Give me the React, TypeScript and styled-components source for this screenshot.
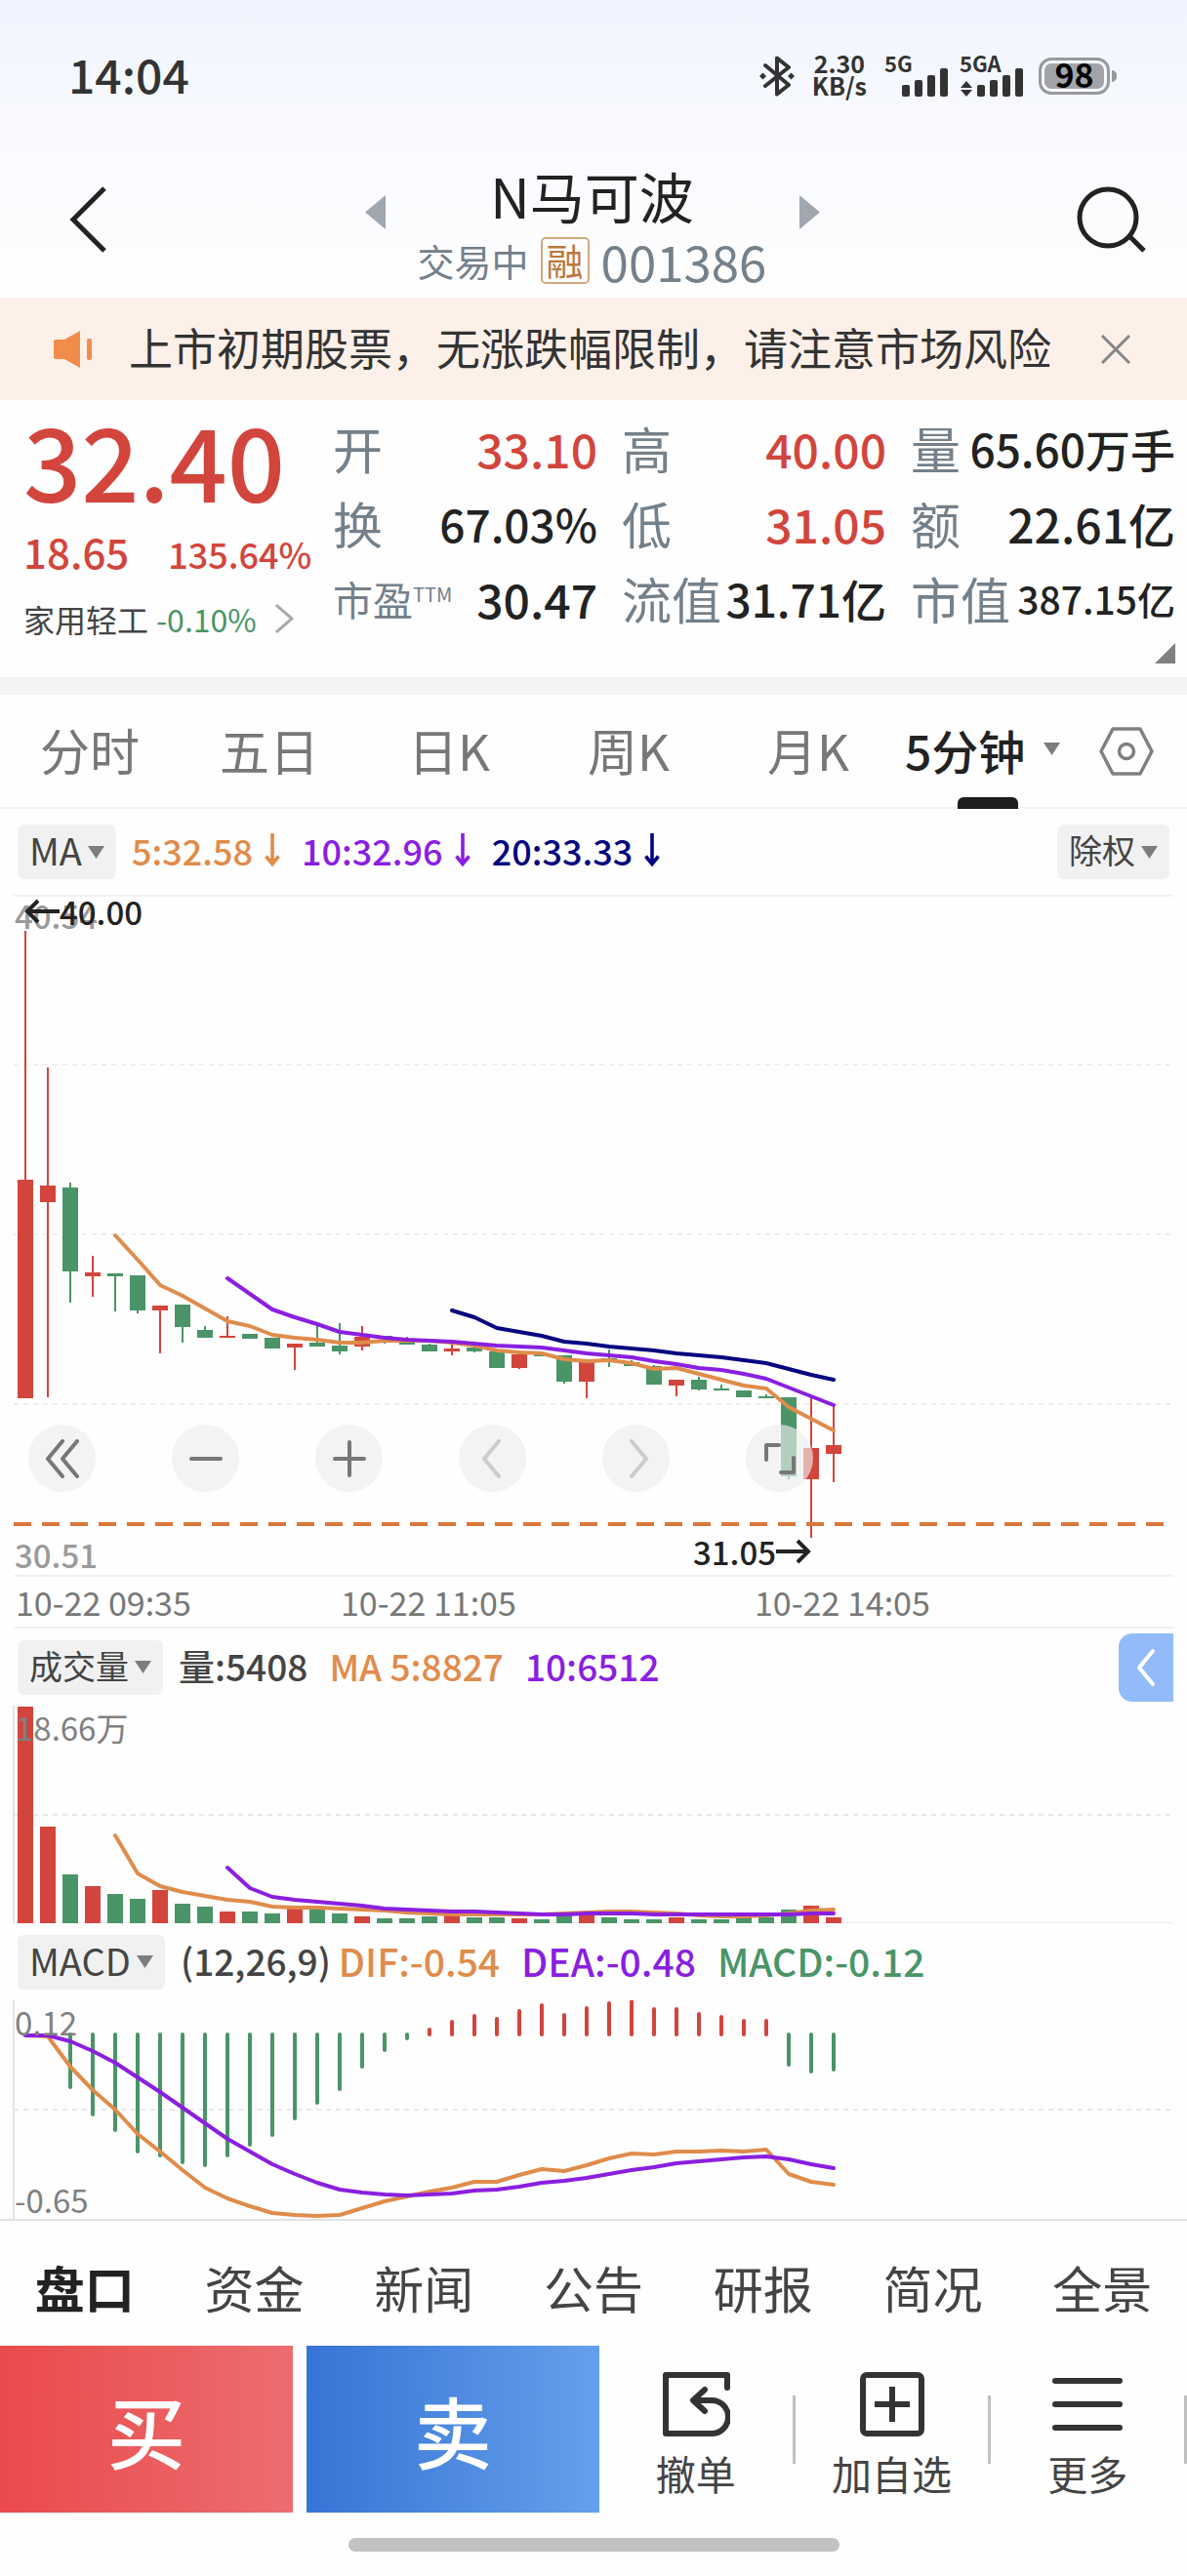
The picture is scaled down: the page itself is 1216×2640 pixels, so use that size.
import React from 'react';
import styled, { createGlobalStyle } from 'styled-components';

const color = {
  ink: '#222222',
  text: '#444444',
  muted: '#777777',
  slate: '#74808a',
  red: '#d2453c',
  green: '#4a9468',
  orange: '#df8c4b',
  purple: '#8a1fe0',
  navy: '#05057f',
  line: '#f1f1f1',
  pill: '#f1f1f1',
};

const GlobalStyle = createGlobalStyle`
  * { box-sizing: border-box; }
  body {
    margin: 0;
    background: #fefefe;
    font-family: "Noto Sans CJK SC", "Noto Sans", sans-serif;
    color: ${color.ink};
  }
  button, select {
    font: inherit;
    color: inherit;
    border: 0;
    padding: 0;
    margin: 0;
    background: none;
  }
  svg { display: block; flex: none; }
`;

const Page = styled.div`
  display: flex;
  flex-direction: column;
  overflow: hidden;
`;

/* ---------- top area ---------- */

const Top = styled.header`
  background: linear-gradient(#f0f4fe, #fafbff 50%, #fefefe);
`;

const StatusBar = styled.div`
  display: flex;
  align-items: center;
  justify-content: space-between;
  height: 154px;
  padding: 0 72px 0 70px;
  color: #333333;
`;

const Clock = styled.span`
  font-size: 48px;
  font-weight: 500;
  line-height: 54px;
  padding-bottom: 4px;
`;

const StatusIcons = styled.div`
  display: flex;
  align-items: center;
  gap: 11px;
  padding-top: 2px;
`;

const Speed = styled.div`
  display: flex;
  flex-direction: column;
  align-items: center;
  margin: 0 7px;
  font-size: 25px;
  font-weight: 700;
  line-height: 23px;
  padding-bottom: 4px;
`;

const Signal = styled.div`
  position: relative;
  width: 66px;
  height: 42px;
  display: flex;
  justify-content: flex-end;
  align-items: flex-end;
  gap: 5px;
`;

const SignalLabel = styled.span`
  position: absolute;
  left: 0;
  top: -4px;
  font-size: 22px;
  font-weight: 700;
  line-height: 22px;
`;

const Battery = styled.div`
  display: flex;
  align-items: center;
  gap: 2px;
  margin-left: 4px;
`;

const BatteryShell = styled.div`
  width: 73px;
  height: 38px;
  border: 3px solid #98999c;
  border-radius: 13px;
  padding: 3px;
`;

const BatteryFill = styled.div`
  height: 26px;
  border-radius: 7px;
  background: #a3a4a8;
  color: #000000;
  font-size: 34px;
  font-weight: 700;
  line-height: 22px;
  text-align: center;
`;

const BatteryCap = styled.div`
  width: 5px;
  height: 12px;
  border-radius: 0 6px 6px 0;
  background: #98999c;
`;

const TitleBar = styled.div`
  display: flex;
  align-items: center;
  height: 151px;
  padding: 0 41px 10px 70px;
`;

const IconButton = styled.button`
  display: flex;
  align-items: center;
  justify-content: center;
  flex: none;
`;

const StockSwitch = styled.div`
  flex: 1;
  display: flex;
  justify-content: center;
  align-items: center;
`;

const StepButton = styled(IconButton)`
  padding-bottom: 14px;
`;

const StockName = styled.div`
  width: 424px;
  padding-top: 14px;
  display: flex;
  flex-direction: column;
  align-items: center;
`;

const Title = styled.h1`
  margin: 0;
  font-size: 56px;
  font-weight: 400;
  line-height: 70px;
`;

const SubTitle = styled.div`
  display: flex;
  align-items: center;
  gap: 12px;
  height: 64px;
  color: ${color.slate};
  font-size: 38px;
  line-height: 60px;
`;

const Badge = styled.span`
  border: 2px solid #d3a87c;
  border-radius: 5px;
  color: #b9783c;
  font-size: 38px;
  line-height: 42px;
  padding: 0 4px;
  height: 48px;
`;

const Code = styled.span`
  font-size: 51px;
`;

const Notice = styled.div`
  display: flex;
  align-items: center;
  height: 105px;
  padding: 0 58px 0 55px;
  background: #fcf0e8;
  color: #333333;
`;

const NoticeText = styled.p`
  flex: 1;
  margin: 0 0 0 36px;
  font-size: 45px;
  line-height: 60px;
  white-space: nowrap;
  padding-bottom: 4px;
`;

/* ---------- quote ---------- */

const Quote = styled.section`
  display: flex;
  height: 284px;
  padding: 0 12px 0 24px;
`;

const PriceBlock = styled.div`
  flex: none;
  width: 317px;
`;

const Price = styled.div`
  color: ${color.red};
  font-size: 104px;
  font-weight: 500;
  line-height: 120px;
`;

const Change = styled.div`
  display: flex;
  align-items: baseline;
  gap: 40px;
  color: ${color.red};
  font-size: 42px;
  font-weight: 500;
  line-height: 70px;
`;

const Percent = styled.span`
  font-size: 36px;
`;

const Sector = styled.a`
  display: flex;
  align-items: center;
  gap: 8px;
  color: ${color.text};
  font-size: 32px;
  line-height: 64px;
  text-decoration: none;
  white-space: nowrap;
`;

const SectorChange = styled.span`
  color: ${color.green};
  margin-right: 10px;
`;

const StatArea = styled.div`
  flex: 1;
  padding-top: 10px;
`;

const StatGrid = styled.dl`
  margin: 0;
  display: grid;
  grid-template-columns: repeat(3, 1fr);
  column-gap: 25px;
`;

const Stat = styled.div`
  display: flex;
  align-items: center;
  justify-content: space-between;
  height: 77px;
  white-space: nowrap;
`;

const StatLabel = styled.dt<{ $small?: boolean }>`
  color: ${color.slate};
  font-size: ${(p) => (p.$small ? 41 : 51)}px;
  line-height: 76px;

  sup {
    font-size: 20px;
    line-height: 20px;
    vertical-align: 14px;
  }
`;

const StatValue = styled.dd<{ $size: number; $up?: boolean }>`
  margin: 0;
  font-size: ${(p) => p.$size}px;
  font-weight: 500;
  line-height: 76px;
  color: ${(p) => (p.$up ? color.red : color.ink)};
`;

const ExpandRow = styled.div`
  display: flex;
  justify-content: flex-end;
  padding-top: 8px;
`;

const Divider = styled.div`
  height: 18px;
  background: #f4f4f4;
`;

/* ---------- period tabs ---------- */

const PeriodTabs = styled.nav`
  display: flex;
  height: 117px;
  border-bottom: 2px solid #f2f2f2;
`;

const PeriodTab = styled.button`
  flex: 184;
  width: 0;
  padding-bottom: 4px;
  color: ${color.muted};
  font-size: 51px;
  line-height: 70px;
`;

const PeriodPicker = styled.label`
  position: relative;
  flex: 184;
  min-width: 0;
  display: flex;
  align-items: center;
  justify-content: center;
  gap: 18px;
  padding-bottom: 4px;

  select {
    appearance: none;
    font-size: 48px;
    font-weight: 500;
    line-height: 70px;
  }

  svg {
    margin-right: 11px;
  }

  &::after {
    content: "";
    position: absolute;
    left: 61px;
    bottom: -2px;
    width: 62px;
    height: 12px;
    border-radius: 6px 6px 0 0;
    background: #1e1e1e;
  }
`;

const SettingsButton = styled(IconButton)`
  flex: 112;
  min-width: 0;

  svg {
    margin-right: 13px;
  }
`;

/* ---------- indicator rows ---------- */

const Indicator = styled.div<{ $h: number }>`
  display: flex;
  align-items: center;
  height: ${(p) => p.$h}px;
  padding: 0 18px;
`;

const Pill = styled.label<{ $size: number }>`
  display: flex;
  align-items: center;
  gap: 6px;
  height: 56px;
  padding: 0 12px;
  border-radius: 6px;
  background: ${color.pill};
  color: ${color.text};

  select {
    appearance: none;
    font-size: ${(p) => p.$size}px;
    line-height: 50px;
    height: 56px;
    padding-bottom: 4px;
  }
`;

const Legend = styled.div<{ $size: number }>`
  flex: 1;
  display: flex;
  align-items: center;
  gap: 22px;
  margin-left: 16px;
  padding-bottom: 4px;
  font-size: ${(p) => p.$size}px;
  font-weight: 500;
  line-height: 52px;
  white-space: nowrap;
`;

const Reading = styled.span<{ $c: string }>`
  display: flex;
  align-items: center;
  gap: 12px;
  color: ${(p) => p.$c};
`;

const Params = styled.span`
  margin-right: -14px;
  color: ${color.text};
  font-size: 37px;
`;

const SideTab = styled(IconButton)`
  width: 56px;
  height: 70px;
  margin-right: -4px;
  border-radius: 14px 0 0 14px;
  background: #93bbf9;
`;

/* ---------- charts ---------- */

const ChartBox = styled.div<{ $h: number }>`
  position: relative;
  height: ${(p) => p.$h}px;

  > svg {
    width: 100%;
    height: 100%;
  }
`;

const ChartLabel = styled.span<{ $x: number; $y: number; $c?: string; $w?: number }>`
  position: absolute;
  left: ${(p) => p.$x}px;
  top: ${(p) => p.$y}px;
  display: flex;
  align-items: center;
  font-size: 33px;
  line-height: 40px;
  font-weight: ${(p) => p.$w ?? 400};
  color: ${(p) => p.$c ?? '#808080'};
`;

const Controls = styled.div`
  position: absolute;
  left: 29px;
  top: 543px;
  display: flex;
  gap: 78px;
`;

const RoundButton = styled(IconButton)`
  width: 69px;
  height: 69px;
  border-radius: 50%;
  background: rgba(236, 236, 236, 0.65);
`;

const TimeAxis = styled.div`
  display: grid;
  grid-template-columns: 333px 424px auto;
  height: 55px;
  margin: 0 14px;
  padding-left: 2px;
  border-top: 2px solid ${color.line};
  border-bottom: 2px solid ${color.line};
  color: ${color.muted};
  font-size: 34px;
  line-height: 52px;
  white-space: pre;
`;

/* ---------- bottom area ---------- */

const InfoTabs = styled.nav`
  display: flex;
  height: 130px;
  padding-top: 8px;
  border-top: 2px solid #e2e2e2;
`;

const InfoTab = styled.button<{ $active?: boolean }>`
  flex: 1;
  font-size: 51px;
  line-height: 70px;
  color: ${(p) => (p.$active ? color.ink : color.text)};
  font-weight: ${(p) => (p.$active ? 700 : 400)};
`;

const Trade = styled.div`
  display: flex;
  height: 171px;
`;

const TradeButton = styled.button<{ $from: string; $to: string; $ml?: number }>`
  flex: 300;
  width: 0;
  margin-left: ${(p) => p.$ml ?? 0}px;
  padding-bottom: 2px;
  background: linear-gradient(90deg, ${(p) => p.$from}, ${(p) => p.$to});
  color: #ffffff;
  font-size: 80px;
  font-weight: 500;
  line-height: 110px;
`;

const Actions = styled.div`
  flex: 602;
  width: 0;
  display: flex;
  align-items: center;
`;

const Action = styled.button`
  flex: 1;
  display: flex;
  flex-direction: column;
  align-items: center;
  padding-top: 14px;
  color: ${color.text};
  font-size: 41px;
  line-height: 60px;
  gap: 6px;
`;

const ActionRule = styled.i`
  width: 3px;
  height: 70px;
  background: #c0c0c0;
`;

const HomeArea = styled.div`
  display: flex;
  justify-content: center;
  align-items: center;
  height: 65px;
`;

const HomeBar = styled.div`
  width: 503px;
  height: 14px;
  border-radius: 7px;
  background: #c2c2c2;
`;

/* ---------- data ---------- */

type Dir = 'r' | 'g';
const X0 = 26;
const STEP = 23;
const px = (i: number) => X0 + i * STEP;

// direction, high, low, body top, body bottom (chart y)
const candles: [Dir, number, number, number, number][] = [
  ['r', 37, 516, 292, 516], ['r', 177, 515, 298, 315], ['g', 295, 418, 300, 386],
  ['r', 370, 412, 387, 391], ['g', 388, 427, 388, 391], ['g', 390, 429, 390, 426],
  ['r', 421, 470, 421, 426], ['g', 420, 459, 420, 443], ['g', 442, 454, 446, 454],
  ['r', 432, 454, 452, 454], ['g', 450, 455, 450, 455], ['g', 454, 465, 454, 465],
  ['r', 460, 487, 460, 464], ['g', 442, 463, 459, 463], ['g', 439, 471, 462, 468],
  ['r', 442, 467, 453, 463], ['g', 452, 460, 452, 454], ['g', 453, 461, 459, 461],
  ['g', 460, 468, 461, 468], ['r', 460, 472, 465, 468], ['g', 462, 469, 464, 468],
  ['g', 468, 485, 468, 485], ['r', 471, 486, 471, 485], ['g', 470, 473, 471, 472],
  ['g', 472, 501, 472, 499], ['r', 479, 516, 479, 499], ['g', 466, 484, 475, 476],
  ['g', 477, 483, 479, 483], ['g', 482, 502, 483, 502], ['r', 497, 514, 497, 503],
  ['g', 494, 508, 497, 507], ['g', 502, 508, 506, 508], ['g', 508, 515, 508, 515],
  ['g', 512, 516, 514, 516], ['g', 515, 599, 515, 596], ['r', 515, 659, 567, 599],
  ['r', 523, 602, 564, 573],
];

const ma5 = [349, 374, 400, 411, 424, 437, 442, 451, 454, 456, 459, 459, 457, 457, 457, 459, 462, 467, 469, 470, 476, 478, 477, 480, 486, 485, 491, 497, 503, 506, 525, 537, 549];
const ma10 = [393, 409, 425, 433, 440, 448, 451, 454, 456, 457, 458, 460, 462, 463, 464, 467, 470, 472, 474, 478, 481, 485, 487, 491, 496, 505, 514, 523];
const ma20 = [426, 433, 444, 448, 452, 458, 460, 463, 465, 467, 470, 472, 474, 477, 480, 486, 492, 497];

const volTops = [1, 124, 173, 185, 193, 198, 189, 203, 206, 211, 211, 213, 208, 208, 213, 216, 218, 218, 216, 214, 217, 217, 218, 219, 215, 214, 217, 219, 219, 217, 219, 219, 216, 217, 209, 205, 217];
const volDirs = 'rrgrggrggrggrggrgggrggrggrgggrgggggrr';
const vol5 = [133, 172, 185, 191, 195, 199, 201, 206, 207, 207, 208, 209, 210, 212, 213, 214, 214, 214, 214, 214, 213, 212, 211, 211, 212, 213, 215, 216, 216, 215, 213, 210, 209];
const vol10 = [166, 187, 196, 199, 201, 203, 205, 208, 209, 210, 211, 211, 212, 213, 214, 214, 213, 213, 213, 214, 214, 214, 214, 214, 214, 214, 213, 213];

const macdEnds: (number | null)[] = [null, null, 89, 117, 133, 155, 159, 166, 169, 159, 148, 138, 121, 105, 91, 68, 51, 39, 30, 22, 16, 19, 11, 5, 15, 8, 3, 1, 9, 9, 14, 17, 21, 21, 66, 73, 71];
const dif = [36, 37, 68, 92, 112, 137, 155, 174, 192, 203, 211, 218, 220, 221, 220, 213, 206, 201, 196, 192, 186, 186, 179, 173, 175, 169, 162, 157, 158, 155, 155, 154, 155, 153, 178, 186, 189];
const dea = [36, 36, 42, 52, 64, 79, 94, 110, 126, 142, 155, 168, 178, 187, 194, 197, 199, 200, 199, 198, 195, 194, 191, 187, 185, 182, 178, 174, 171, 167, 165, 163, 161, 160, 163, 168, 172];

/* ---------- drawing helpers ---------- */

const Curve = ({ from, ys, stroke }: { from: number; ys: number[]; stroke: string }) => (
  <polyline
    points={ys.map((y, i) => `${px(from + i)},${y}`).join(' ')}
    fill="none"
    stroke={stroke}
    strokeWidth={4}
    strokeLinecap="round"
    strokeLinejoin="round"
  />
);

const GridLine = ({ y, dash = '5 5', stroke = '#eeeeee', w = 2 }: { y: number; dash?: string; stroke?: string; w?: number }) => (
  <line x1={14} x2="98.8%" y1={y} y2={y} stroke={stroke} strokeWidth={w} strokeDasharray={dash} />
);

const Caret = () => (
  <svg width="17" height="13" viewBox="0 0 17 13"><path d="M0 0h17l-8.500 13z" fill="#7d7d7d" /></svg>
);

const DownArrow = () => (
  <svg width="16" height="34" viewBox="0 0 16 34" fill="none" stroke="currentColor" strokeWidth="3.600">
    <path d="M8 0v31M1.500 23.500L8 31.500l6.500-8" />
  </svg>
);

const SideArrow = ({ flip }: { flip?: boolean }) => (
  <svg width="36" height="26" viewBox="0 0 36 26" fill="none" stroke={color.ink} strokeWidth="4">
    <path d={flip ? 'M0 13h33M22 2l11 11-11 11' : 'M36 13H3M14 2L3 13l11 11'} />
  </svg>
);

const Bars = () => (
  <svg width="48" height="30" viewBox="0 0 48 30" fill="#333">
    <rect x="0" y="18" width="8" height="12" rx="2" />
    <rect x="13" y="13" width="8" height="17" rx="2" />
    <rect x="26" y="8" width="8" height="22" rx="2" />
    <rect x="39" y="1" width="8" height="29" rx="2" />
  </svg>
);

const PillSelect = ({ name, value, size }: { name: string; value: string; size: number }) => (
  <Pill $size={size}>
    <select aria-label={name} defaultValue={value}><option>{value}</option></select>
    <Caret />
  </Pill>
);

type StatItem = { label: React.ReactNode; value: string; size: number; up?: boolean; small?: boolean };
const stats: StatItem[] = [
  { label: '开', value: '33.10', size: 48, up: true },
  { label: '高', value: '40.00', size: 48, up: true },
  { label: '量', value: '65.60万手', size: 46 },
  { label: '换', value: '67.03%', size: 46 },
  { label: '低', value: '31.05', size: 48, up: true },
  { label: '额', value: '22.61亿', size: 48 },
  { label: <>市盈<sup>TTM</sup></>, value: '30.47', size: 48, small: true },
  { label: '流值', value: '31.71亿', size: 46 },
  { label: '市值', value: '387.15亿', size: 39 },
];

const glyph = { fill: 'none', strokeWidth: 4, strokeLinecap: 'round' as const, strokeLinejoin: 'round' as const };

export default function App() {
  return (
    <Page>
      <GlobalStyle />
      <Top>
        <StatusBar>
          <Clock>14:04</Clock>
          <StatusIcons>
            <svg width="36" height="42" viewBox="0 0 36 42" fill="none" stroke="#333" strokeWidth="4" strokeLinejoin="round" strokeLinecap="round">
              <path d="M6 10l24 20-12 9.500V2.500L30 12 6 31" />
              <path d="M0 21l3.500-3.500L7 21l-3.500 3.500zM29 21l3.500-3.500L36 21l-3.500 3.500z" fill="#333" stroke="none" />
            </svg>
            <Speed><span>2.30</span><span>KB/s</span></Speed>
            <Signal><SignalLabel>5G</SignalLabel><Bars /></Signal>
            <Signal>
              <SignalLabel>5GA</SignalLabel>
              <svg width="12" height="16" viewBox="0 0 12 16"><path d="M0 7l6-7 6 7zM0 9h12l-6 7z" fill="#333" /></svg>
              <Bars />
            </Signal>
            <Battery>
              <BatteryShell><BatteryFill>98</BatteryFill></BatteryShell>
              <BatteryCap />
            </Battery>
          </StatusIcons>
        </StatusBar>
        <TitleBar>
          <IconButton aria-label="返回">
            <svg width="40" height="68" viewBox="0 0 40 68" fill="none" stroke={color.ink} strokeWidth="5"><path d="M37 2L5 34l32 32" /></svg>
          </IconButton>
          <StockSwitch>
            <StepButton aria-label="上一只">
              <svg width="21" height="35" viewBox="0 0 21 35"><path d="M21 0v35L0 17.500z" fill="#a0a7af" /></svg>
            </StepButton>
            <StockName>
              <Title>N马可波</Title>
              <SubTitle><span>交易中</span><Badge>融</Badge><Code>001386</Code></SubTitle>
            </StockName>
            <StepButton aria-label="下一只">
              <svg width="21" height="35" viewBox="0 0 21 35"><path d="M0 0v35l21-17.500z" fill="#a0a7af" /></svg>
            </StepButton>
          </StockSwitch>
          <IconButton aria-label="搜索">
            <svg width="72" height="70" viewBox="0 0 72 70" fill="none" stroke={color.ink} strokeWidth="5">
              <circle cx="32" cy="33" r="29" /><path d="M54 52l15 15" />
            </svg>
          </IconButton>
        </TitleBar>
      </Top>

      <Notice>
        <svg width="41" height="38" viewBox="0 0 41 38" fill="#f28c4b">
          <path d="M2 9h9L27 0v38L11 29H2q-2 0-2-2V11q0-2 2-2z" /><rect x="34" y="8" width="5" height="22" rx="2" />
        </svg>
        <NoticeText>上市初期股票，无涨跌幅限制，请注意市场风险</NoticeText>
        <IconButton aria-label="关闭">
          <svg width="30" height="30" viewBox="0 0 30 30" stroke="#868686" strokeWidth="3"><path d="M1 1l28 28M29 1L1 29" /></svg>
        </IconButton>
      </Notice>

      <Quote>
        <PriceBlock>
          <Price>32.40</Price>
          <Change><span>18.65</span><Percent>135.64%</Percent></Change>
          <Sector href="#sector">
            家用轻工<SectorChange>-0.10%</SectorChange>
            <svg width="20" height="30" viewBox="0 0 20 30" fill="none" stroke="#aaa" strokeWidth="3"><path d="M2 1l16 14L2 29" /></svg>
          </Sector>
        </PriceBlock>
        <StatArea>
          <StatGrid>
            {stats.map((s) => (
              <Stat key={s.value}>
                <StatLabel $small={s.small}>{s.label}</StatLabel>
                <StatValue $size={s.size} $up={s.up}>{s.value}</StatValue>
              </Stat>
            ))}
          </StatGrid>
          <ExpandRow>
            <IconButton aria-label="展开">
              <svg width="21" height="21" viewBox="0 0 21 21"><path d="M21 0v21H0z" fill="#808080" /></svg>
            </IconButton>
          </ExpandRow>
        </StatArea>
      </Quote>
      <Divider />

      <PeriodTabs>
        {['分时', '五日', '日K', '周K', '月K'].map((t) => <PeriodTab key={t}>{t}</PeriodTab>)}
        <PeriodPicker>
          <select aria-label="分钟周期" defaultValue="5分钟"><option>5分钟</option></select>
          <Caret />
        </PeriodPicker>
        <SettingsButton aria-label="设置">
          <svg width="56" height="50" viewBox="0 0 56 50" fill="none" stroke="#808080" strokeWidth="3.500" strokeLinejoin="round">
            <path d="M14 2h28l12 23-12 23H14L2 25z" /><circle cx="28" cy="25" r="7.500" />
          </svg>
        </SettingsButton>
      </PeriodTabs>

      <Indicator $h={88}>
        <PillSelect name="主图指标" value="MA" size={38} />
        <Legend $size={36}>
          <Reading $c={color.orange}>5:32.58<DownArrow /></Reading>
          <Reading $c={color.purple}>10:32.96<DownArrow /></Reading>
          <Reading $c={color.navy}>20:33.33<DownArrow /></Reading>
        </Legend>
        <PillSelect name="复权方式" value="除权" size={34} />
      </Indicator>

      <ChartBox $h={697}>
        <svg role="img" aria-label="5分钟K线">
          <GridLine y={1} dash="none" stroke="#f2f2f2" />
          <GridLine y={174} /><GridLine y={348} /><GridLine y={522} />
          {candles.map(([d, hi, lo, top, bottom], i) => (
            <g key={i} fill={d === 'r' ? color.red : color.green}>
              <rect x={px(i) - 1} y={hi} width={2} height={lo - hi} />
              <rect x={px(i) - 8} y={top} width={16} height={Math.max(bottom - top, 2)} />
            </g>
          ))}
          <GridLine y={645} dash="18 11" stroke="#d9773c" w={4} />
          <Curve from={4} ys={ma5} stroke={color.orange} />
          <Curve from={19} ys={ma20} stroke={color.navy} />
          <Curve from={9} ys={ma10} stroke={color.purple} />
        </svg>
        <ChartLabel $x={15} $y={1} $w={500} $c="#9a9a9a">40.54</ChartLabel>
        <ChartLabel $x={25} $y={-3} $w={500} $c={color.ink}><SideArrow />40.00</ChartLabel>
        <ChartLabel $x={15} $y={656} $w={500} $c="#9a9a9a">30.51</ChartLabel>
        <ChartLabel $x={710} $y={653} $w={500} $c={color.ink}>31.05<SideArrow flip /></ChartLabel>
        <Controls>
          <RoundButton aria-label="最左">
            <svg width="36" height="40" viewBox="0 0 36 40" {...glyph} stroke="#777"><path d="M18 2L3 20l15 18M33 2L18 20l15 18" /></svg>
          </RoundButton>
          <RoundButton aria-label="缩小">
            <svg width="36" height="40" viewBox="0 0 36 40" {...glyph} stroke="#777"><path d="M3 20h30" /></svg>
          </RoundButton>
          <RoundButton aria-label="放大">
            <svg width="36" height="40" viewBox="0 0 36 40" {...glyph} stroke="#777"><path d="M3 20h30M18 3v34" /></svg>
          </RoundButton>
          <RoundButton aria-label="左移">
            <svg width="36" height="40" viewBox="0 0 36 40" {...glyph} stroke="#ccc"><path d="M24 2L9 20l15 18" /></svg>
          </RoundButton>
          <RoundButton aria-label="右移">
            <svg width="36" height="40" viewBox="0 0 36 40" {...glyph} stroke="#ccc"><path d="M13 2l15 18-15 18" /></svg>
          </RoundButton>
          <RoundButton aria-label="全屏">
            <svg width="36" height="36" viewBox="0 0 36 36" {...glyph} stroke="#777"><path d="M4 19V4h13M32 17v15H19" /></svg>
          </RoundButton>
        </Controls>
      </ChartBox>
      <TimeAxis><span>10-22 09:35</span><span>10-22 11:05</span><span>10-22 14:05</span></TimeAxis>

      <Indicator $h={79}>
        <PillSelect name="副图指标一" value="成交量" size={34} />
        <Legend $size={37}>
          <Reading $c={color.text}>量:5408</Reading>
          <Reading $c={color.orange}>MA 5:8827</Reading>
          <Reading $c={color.purple}>10:6512</Reading>
        </Legend>
        <SideTab aria-label="展开侧栏">
          <svg width="20" height="40" viewBox="0 0 20 40" {...glyph} stroke="#fff"><path d="M17 3L3 20l14 17" /></svg>
        </SideTab>
      </Indicator>
      <ChartBox $h={223}>
        <svg role="img" aria-label="成交量">
          <line x1={14} x2={14} y1={0} y2={223} stroke="#e4e4e4" strokeWidth={2} />
          <GridLine y={112} stroke="#e8e8e8" />
          <GridLine y={223} dash="none" />
          {volTops.map((y, i) => (
            <rect key={i} x={px(i) - 8} y={y} width={16} height={223 - y} fill={volDirs[i] === 'r' ? color.red : color.green} />
          ))}
          <Curve from={4} ys={vol5} stroke={color.orange} />
          <Curve from={9} ys={vol10} stroke={color.purple} />
        </svg>
        <ChartLabel $x={16} $y={2}>18.66万</ChartLabel>
      </ChartBox>

      <Indicator $h={79}>
        <PillSelect name="副图指标二" value="MACD" size={38} />
        <Legend $size={39}>
          <Params>(12,26,9)</Params>
          <Reading $c={color.orange}>DIF:-0.54</Reading>
          <Reading $c={color.purple}>DEA:-0.48</Reading>
          <Reading $c={color.green}>MACD:-0.12</Reading>
        </Legend>
      </Indicator>
      <ChartBox $h={224}>
        <svg role="img" aria-label="MACD">
          <line x1={14} x2={14} y1={0} y2={224} stroke="#e4e4e4" strokeWidth={2} />
          <GridLine y={112} stroke="#e8e8e8" />
          {macdEnds.map((y, i) => y !== null && (
            <line key={i} x1={px(i)} x2={px(i)} y1={35} y2={y} stroke={y < 35 ? color.red : color.green} strokeWidth={4} strokeLinecap="round" />
          ))}
          <Curve from={0} ys={dif} stroke={color.orange} />
          <Curve from={0} ys={dea} stroke={color.purple} />
        </svg>
        <ChartLabel $x={15} $y={2}>0.12</ChartLabel>
        <ChartLabel $x={15} $y={184}>-0.65</ChartLabel>
      </ChartBox>

      <InfoTabs>
        {['盘口', '资金', '新闻', '公告', '研报', '简况', '全景'].map((t, i) => (
          <InfoTab key={t} $active={i === 0}>{t}</InfoTab>
        ))}
      </InfoTabs>

      <Trade>
        <TradeButton $from="#ea4a4b" $to="#ec6d70">买</TradeButton>
        <TradeButton $from="#3774d6" $to="#64a0ea" $ml={14}>卖</TradeButton>
        <Actions>
          <Action>
            <svg width="70" height="68" viewBox="0 0 70 68" {...glyph} strokeWidth={6} stroke="#333">
              <path d="M67 17V4H4v60h47a16.500 16.500 0 0 0 0-34H34M44 19L32 30l12 11" />
            </svg>
            撤单
          </Action>
          <ActionRule />
          <Action>
            <svg width="66" height="68" viewBox="0 0 66 68" {...glyph} strokeLinecap="butt" strokeWidth={6} stroke="#333">
              <rect x="3" y="4" width="60" height="60" rx="4" /><path d="M15 34h36M33 16v36" />
            </svg>
            加自选
          </Action>
          <ActionRule />
          <Action>
            <svg width="72" height="68" viewBox="0 0 72 68" {...glyph} strokeWidth={6} stroke="#333">
              <path d="M3 10h66M3 34h66M3 58h66" />
            </svg>
            更多
          </Action>
          <ActionRule />
        </Actions>
      </Trade>
      <HomeArea><HomeBar /></HomeArea>
    </Page>
  );
}
